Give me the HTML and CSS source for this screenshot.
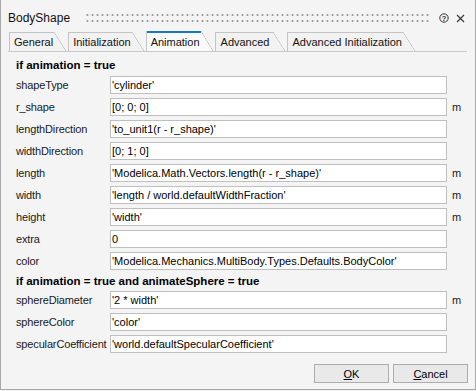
FILE: index.html
```html
<!DOCTYPE html>
<html lang="en">
<head>
  <meta charset="UTF-8">
  <title>BodyShape</title>
  <link rel="stylesheet" href="styles.css">
</head>
<body>

<div class="dialog">
  <div class="titlebar">
    <span class="title">BodyShape</span>
    <span class="grip"></span>
    <svg class="help" width="10" height="10" viewBox="0 0 10 10">
      <circle cx="5" cy="5" r="4.2" fill="none" stroke="#333" stroke-width="1"/>
      <text x="5" y="7.6" text-anchor="middle" font-size="7.5" font-family="Liberation Sans, sans-serif" font-weight="bold" fill="#333">?</text>
    </svg>
    <svg class="close" width="9" height="9" viewBox="0 0 9 9">
      <path d="M1 1 L8 8 M8 1 L1 8" stroke="#333" stroke-width="1.1"/>
    </svg>
  </div>

  <div class="tabs">
    <div class="tab">General</div>
    <div class="tab">Initialization</div>
    <div class="tab active">Animation</div>
    <div class="tab wide">Advanced</div>
    <div class="tab">Advanced Initialization</div>
  </div>

  <div class="panel">
    <div class="group-title">if animation = true</div>
    <div class="form">
      <label>shapeType</label>
      <input type="text" value="'cylinder'" readonly>
      <span class="unit"></span>

      <label>r_shape</label>
      <input type="text" value="[0; 0; 0]" readonly>
      <span class="unit">m</span>

      <label>lengthDirection</label>
      <input type="text" value="'to_unit1(r - r_shape)'" readonly>
      <span class="unit"></span>

      <label>widthDirection</label>
      <input type="text" value="[0; 1; 0]" readonly>
      <span class="unit"></span>

      <label>length</label>
      <input type="text" value="'Modelica.Math.Vectors.length(r - r_shape)'" readonly>
      <span class="unit">m</span>

      <label>width</label>
      <input type="text" value="'length / world.defaultWidthFraction'" readonly>
      <span class="unit">m</span>

      <label>height</label>
      <input type="text" value="'width'" readonly>
      <span class="unit">m</span>

      <label>extra</label>
      <input type="text" value="0" readonly>
      <span class="unit"></span>

      <label>color</label>
      <input type="text" value="'Modelica.Mechanics.MultiBody.Types.Defaults.BodyColor'" readonly>
      <span class="unit"></span>
    </div>

    <div class="group-title second">if animation = true and animateSphere = true</div>
    <div class="form">
      <label>sphereDiameter</label>
      <input type="text" value="'2 * width'" readonly>
      <span class="unit">m</span>

      <label>sphereColor</label>
      <input type="text" value="'color'" readonly>
      <span class="unit"></span>

      <label>specularCoefficient</label>
      <input type="text" value="'world.defaultSpecularCoefficient'" readonly>
      <span class="unit"></span>
    </div>
  </div>

  <div class="actions">
    <button><u>O</u>K</button>
    <button><u>C</u>ancel</button>
  </div>
</div>

</body>
</html>
```

FILE: styles.css
```css
body {
  margin: 0;
  font-family: "Liberation Sans", Arial, sans-serif;
  font-size: 11px;
  color: #1a1a1a;
  background: #f4f4f4;
}

.dialog {
  width: 476px;
  height: 390px;
  box-sizing: border-box;
  border-left: 1px solid #a8a8a8;
  border-right: 1px solid #a8a8a8;
  border-bottom: 1px solid #a8a8a8;
  background: #f4f4f4;
}

/* title bar */
.titlebar {
  height: 32px;
  box-sizing: border-box;
  padding: 4px 0 0 7px;
  display: flex;
  align-items: center;
}

.title {
  font-size: 12px;
  color: #111;
  width: 77px;
}

.grip {
  width: 345px;
  height: 12px;
  background-image: radial-gradient(circle, #9a9a9a 0.8px, transparent 1.3px);
  background-size: 5px 6px;
}

.help {
  margin-left: 9px;
}

.close {
  margin-left: 7px;
}

/* tabs */
.tabs {
  display: flex;
  align-items: flex-end;
  gap: 2px;
  height: 19px;
  margin: 0 8px 0 7px;
  padding-left: 1px;
  border-bottom: 1px solid #c9c9c9;
}

.tab {
  position: relative;
  height: 19px;
  box-sizing: border-box;
  padding: 2px 13px 0 4px;
  line-height: 17px;
  border-left: 1px solid #c4c4c4;
  color: #111;
  background:
    linear-gradient(#c4c4c4, #c4c4c4) left top / calc(100% - 12px) 1px no-repeat,
    linear-gradient(#f2f2f2, #f2f2f2) left top / calc(100% - 12px) 100% no-repeat;
}

.tab.wide {
  padding-left: 5px;
  padding-right: 16px;
}

.tab::after {
  content: "";
  position: absolute;
  right: 0;
  top: 0;
  width: 12px;
  height: 100%;
  background: linear-gradient(to top right, #f2f2f2 calc(50% - 0.6px), #bdbdbd 50%, transparent calc(50% + 0.6px));
}

.tab.active {
  height: 20px;
  padding-top: 3px;
  background:
    linear-gradient(#1a78bd, #1a78bd) left top / calc(100% - 12px) 2px no-repeat,
    linear-gradient(#fafafa, #fafafa) left top / calc(100% - 12px) 100% no-repeat;
}

.tab.active::after {
  background: linear-gradient(to top right, #fafafa calc(50% - 0.6px), #bdbdbd 50%, transparent calc(50% + 0.6px));
}

/* parameter panel */
.panel {
  padding: 4px 0 0 15px;
}

.group-title {
  font-weight: bold;
  font-size: 11.5px;
  height: 19px;
  line-height: 19px;
  margin-bottom: 1px;
  color: #000;
}

.group-title.second {
  height: 18px;
  line-height: 18px;
  margin-top: 2px;
}

.form {
  display: grid;
  grid-template-columns: 94px 337px auto;
  grid-auto-rows: 18px;
  row-gap: 4px;
  align-items: center;
}

.form label {
  letter-spacing: -0.15px;
  white-space: nowrap;
}

.form input {
  height: 18px;
  box-sizing: border-box;
  border: 1px solid #bfbfbf;
  background: #fff;
  padding: 0 1px;
  margin: 0;
  font: inherit;
  color: #000;
  outline: none;
}

.unit {
  padding-left: 5px;
}

/* buttons */
.actions {
  display: flex;
  justify-content: flex-end;
  gap: 4px;
  margin-top: 11px;
  padding-right: 7px;
}

.actions button {
  width: 75px;
  height: 19px;
  border: 1px solid #adadad;
  background: #e9e9e9;
  font: inherit;
  color: #000;
  padding: 0;
}
```
